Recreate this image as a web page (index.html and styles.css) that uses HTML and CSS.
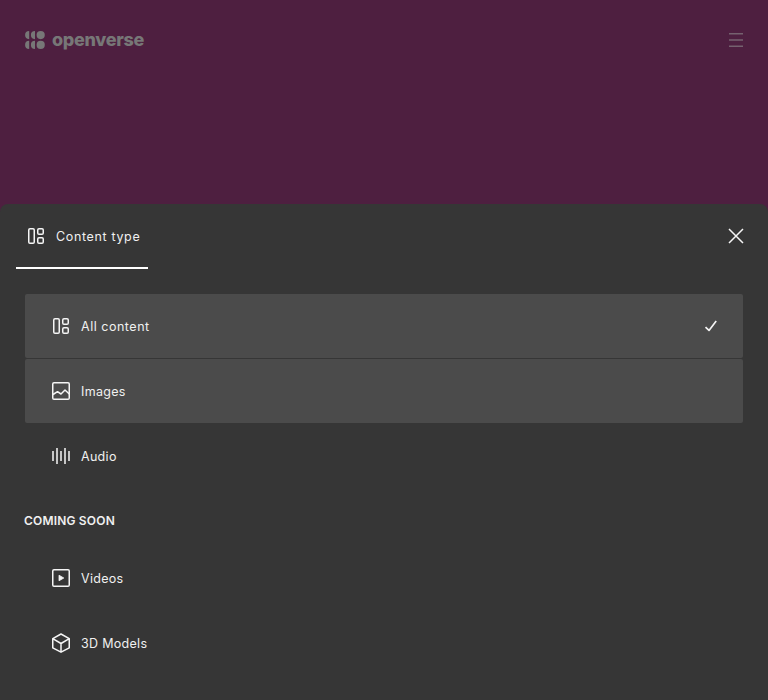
FILE: index.html
```html
<!DOCTYPE html>
<html lang="en">
<head>
<meta charset="utf-8">
<title>Openverse</title>
<link rel="stylesheet" href="styles.css">
</head>
<body>
<svg class="defs" aria-hidden="true">
  <symbol id="all" viewBox="0 0 24 24"><rect x="4.75" y="4.75" width="5.5" height="14.5" rx="1.25"/><rect x="13.75" y="4.75" width="5.5" height="5.5" rx="1.25"/><rect x="13.75" y="13.75" width="5.5" height="5.5" rx="1.25"/></symbol>
  <symbol id="image" viewBox="0 0 24 24"><rect x="3.75" y="3.75" width="16.5" height="16.5" rx="1.25"/><path d="M4 15.500l4.500-2.800 3.500 2.300 4-4 4.300 4"/></symbol>
  <symbol id="audio" viewBox="0 0 24 24"><path d="M4 7v10M8 4v16M12 7v10M16 4v16M20 7v10"/></symbol>
  <symbol id="video" viewBox="0 0 24 24"><rect x="3.75" y="3.75" width="16.5" height="16.5" rx="1.250"/><path class="solid" d="M10 9.200v5.600l4.800-2.800z"/></symbol>
  <symbol id="model" viewBox="0 0 24 24"><path d="M12 3l8.250 4.600v9.200L12 21.200l-8.250-4.400V7.600zM3.750 7.600L12 12.500l8.250-4.900M12 12.500v8.700"/></symbol>
</svg>
<header class="header">
  <a class="brand">
    <svg class="mark" width="20" height="18" viewBox="0 0 20 18"><path d="M4.200 0v8.200a4.100 4.100 0 0 1 0-8.200zM10 0v8.200a4.100 4.100 0 0 1 0-8.200zM4.200 9.800V18a4.100 4.100 0 0 1 0-8.200zM10 9.800V18a4.100 4.100 0 0 1 0-8.200z"/><circle cx="15.700" cy="4.100" r="4.100"/><circle cx="15.700" cy="13.900" r="4.100"/></svg>
    <span class="wordmark">openverse</span>
  </a>
  <svg class="burger" width="14" height="14" viewBox="0 0 14 14"><path d="M0 .75h14M0 7h14M0 13.250h14"/></svg>
</header>
<main class="sheet">
  <div class="tabs">
    <div class="tab"><svg class="icon"><use href="#all"/></svg><span class="label">Content type</span></div>
    <svg class="icon close" viewBox="0 0 24 24"><path d="M5 5l14 14M19 5L5 19"/></svg>
  </div>
  <ul class="list">
    <li class="item filled"><svg class="icon"><use href="#all"/></svg><span class="label wide">All content</span><svg class="icon check" viewBox="0 0 24 24"><path d="M6.500 13.200l3.500 3.200 7.200-9.300"/></svg></li>
    <li class="item filled"><svg class="icon"><use href="#image"/></svg><span class="label">Images</span></li>
    <li class="item"><svg class="icon bars"><use href="#audio"/></svg><span class="label">Audio</span></li>
  </ul>
  <h2 class="heading">Coming soon</h2>
  <ul class="list">
    <li class="item"><svg class="icon"><use href="#video"/></svg><span class="label">Videos</span></li>
    <li class="item"><svg class="icon"><use href="#model"/></svg><span class="label">3D Models</span></li>
  </ul>
</main>
</body>
</html>
```

FILE: styles.css
```css
* { box-sizing: border-box; }
body {
  margin: 0;
  height: 700px;
  display: flex;
  flex-direction: column;
  overflow: hidden;
  background: #4e1f40;
  color: #f0f0f0;
  font: 12.5px/20px Inter, sans-serif;
}
.defs { display: none; }
.header {
  height: 80px;
  margin-bottom: 124px;
  padding: 0 25px;
  display: flex;
  flex-shrink: 0;
  align-items: center;
  justify-content: space-between;
}
.brand { display: flex; align-items: center; gap: 7px; color: #777777; }
.mark { fill: #777777; }
.wordmark { font-size: 18px; font-weight: 800; line-height: 20px; letter-spacing: -0.3px; }
.burger { stroke: #75616f; stroke-width: 1.5; }
.sheet { flex: 1; border-radius: 8px 8px 0 0; background: #363636; }
.tabs {
  height: 65px;
  padding: 0 20px 0 16px;
  display: flex;
  align-items: flex-start;
  justify-content: space-between;
}
.tab {
  width: 132px;
  height: 65px;
  padding: 1px 0 0 8px;
  display: flex;
  align-items: center;
  gap: 8px;
  border-bottom: 2px solid #fff;
  white-space: nowrap;
}
.label { padding-top: 1px; letter-spacing: 0.3px; }
.wide { letter-spacing: 0.52px; }
.tab .label { letter-spacing: 0.65px; }
.icon {
  width: 24px;
  height: 24px;
  flex-shrink: 0;
  fill: none;
  stroke: #f5f5f5;
  stroke-width: 1.5;
  stroke-linejoin: round;
}
.close { margin-top: 20px; }
.bars { stroke: #c6c6c6; stroke-width: 2; }
.solid { fill: #f5f5f5; stroke-width: 0.8; }
.list {
  margin: 0 25px;
  padding: 0;
  display: grid;
  gap: 1px;
  list-style: none;
}
.tabs + .list { margin-top: 25px; }
.item {
  height: 64px;
  padding: 0 20px 0 24px;
  display: flex;
  align-items: center;
  gap: 8px;
  border-radius: 2px;
}
.filled { background: #4b4b4b; }
.check { margin-left: auto; stroke-width: 1.7; }
.heading {
  margin: 23px 24px 15px;
  font-size: 12px;
  font-weight: 600;
  line-height: 20px;
  letter-spacing: 0.18px;
  text-transform: uppercase;
}
```
